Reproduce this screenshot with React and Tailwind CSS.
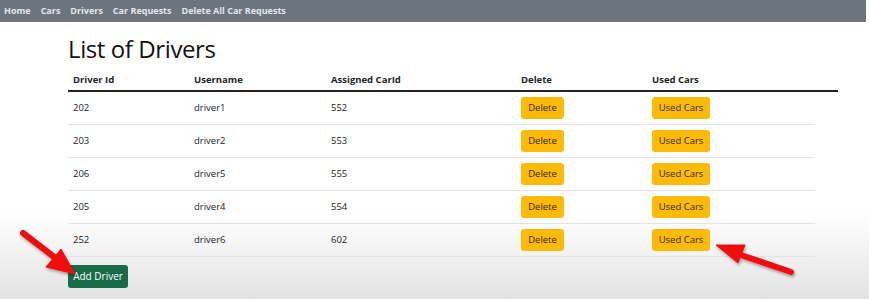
export default function App() {
  const rows = [
    ["202", "driver1", "552"],
    ["203", "driver2", "553"],
    ["206", "driver5", "555"],
    ["205", "driver4", "554"],
    ["252", "driver6", "602"],
  ];
  const cols = "grid grid-cols-[121px_137px_190px_131px_1fr]";
  return (
    <div
      className="relative w-[869px] h-[299px] overflow-hidden bg-[linear-gradient(to_bottom,#ffffff_0px,#ffffff_212px,#f3f3f3_250px,#e2e2e2_299px)] text-[#212529]"
      style={{ fontFamily: '"Open Sans", "Noto Sans", sans-serif' }}
    >
      <nav className="h-[22px] w-[866px] bg-[#6c757d] flex items-center gap-[10px] pl-[4px] text-[9px] font-bold text-[#e4e7ea]">
        <span>Home</span>
        <span>Cars</span>
        <span>Drivers</span>
        <span>Car Requests</span>
        <span>Delete All Car Requests</span>
      </nav>
      <div className="ml-[68px] w-[770px]">
        <h1 className="mt-[11px] text-[24px] leading-[32px] tracking-[-0.4px] text-[#111]">List of Drivers</h1>
        <div className={`${cols} h-[23px] mt-[4px] pt-[2px] items-center text-[9.5px] font-bold border-b-2 border-[#222]`}>
          <div className="pl-[5px]">Driver Id</div>
          <div className="pl-[5px]">Username</div>
          <div className="pl-[5px]">Assigned CarId</div>
          <div className="pl-[5px]">Delete</div>
          <div className="pl-[5px]">Used Cars</div>
        </div>
        {rows.map((r, i) => (
          <div key={i} className={`${cols} w-[747px] h-[33px] items-center text-[9.5px] border-b border-[#e2e4e6]`}>
            <div className="pl-[5px]">{r[0]}</div>
            <div className="pl-[5px]">{r[1]}</div>
            <div className="pl-[5px]">{r[2]}</div>
            <div className="pl-[5px]">
              <button className="h-[22px] w-[43px] rounded-[3px] bg-[#fdbb08] text-[9.5px] text-[#342700]">Delete</button>
            </div>
            <div className="pl-[5px]">
              <button className="h-[22px] w-[58px] rounded-[3px] bg-[#fdbb08] text-[9.5px] text-[#342700]">Used Cars</button>
            </div>
          </div>
        ))}
        <button className="mt-[8px] h-[23px] w-[60px] rounded-[3px] bg-[#176b48] text-[10px] text-white">Add Driver</button>
      </div>
      <svg className="absolute inset-0 pointer-events-none" width="869" height="299" viewBox="0 0 869 299">
        <defs>
          <filter id="sh" x="-20%" y="-20%" width="140%" height="140%">
            <feDropShadow dx="1" dy="2" stdDeviation="1.5" floodColor="#000" floodOpacity="0.35" />
          </filter>
        </defs>
        <g filter="url(#sh)" fill="#f01010" stroke="#f01010">
          <line x1="23" y1="233" x2="58" y2="260" strokeWidth="6" strokeLinecap="round" />
          <polygon points="75,274 46,267 61,249" strokeWidth="1" strokeLinejoin="round" />
          <line x1="791" y1="272" x2="735" y2="253" strokeWidth="6" strokeLinecap="round" />
          <polygon points="716,245 745,245 738,263" strokeWidth="1" strokeLinejoin="round" />
        </g>
      </svg>
    </div>
  );
}
